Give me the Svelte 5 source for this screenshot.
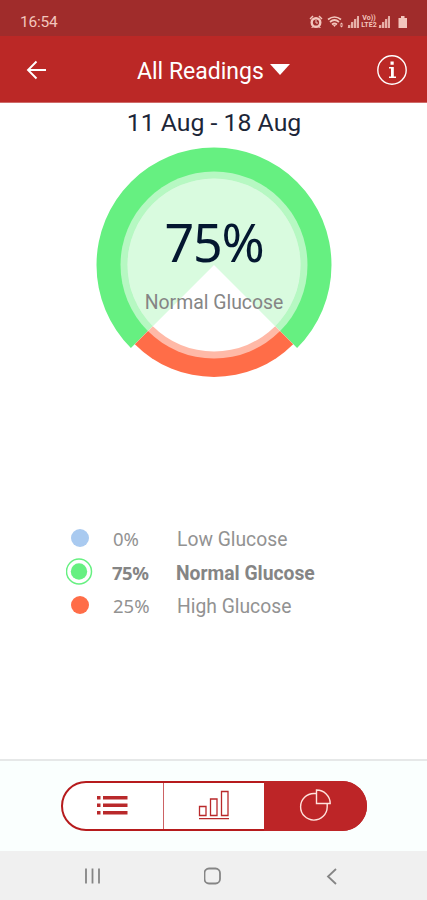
<script lang="ts">
	type Reading = { id: string; label: string; percent: number; color: string };

	const readings: Reading[] = [
		{ id: 'low', label: 'Low Glucose', percent: 0, color: '#a9caf0' },
		{ id: 'normal', label: 'Normal Glucose', percent: 75, color: '#66f081' },
		{ id: 'high', label: 'High Glucose', percent: 25, color: '#ff6d48' }
	];

	let selectedId = $state('normal');
	let view = $state('pie');

	const selected = $derived(readings.find((r) => r.id === selectedId) ?? readings[1]);

	// Slices start at the lower left, 135 degrees clockwise from three o'clock
	const slices = readings.map((reading, i) => {
		const before = readings.slice(0, i).reduce((sum, r) => sum + r.percent, 0);
		return { ...reading, start: 135 + before * 3.6, end: 135 + (before + reading.percent) * 3.6 };
	});

	function sector(start: number, end: number, radius: number) {
		const point = (deg: number) => {
			const a = (deg * Math.PI) / 180;
			return `${(118 + radius * Math.cos(a)).toFixed(2)} ${(118 + radius * Math.sin(a)).toFixed(2)}`;
		};
		return `M118 118L${point(start)}A${radius} ${radius} 0 ${end - start > 180 ? 1 : 0} 1 ${point(end)}Z`;
	}
</script>

<div class="screen">
	<div class="status">
		<span class="time">16:54</span>
		<div class="indicators">
			<svg width="52" height="16" viewBox="0 0 52 16" fill="currentColor">
				<circle cx="8" cy="8.5" r="4.3" fill="none" stroke="currentColor" stroke-width="2.400" />
				<path d="M1.500 4.500l3-3 1 1-3 3zM14.500 4.500l-3-3-1 1 3 3zM3 14l2-2 1 1-2 1zM13 14l-2-2-1 1 2 1z" />
				<path d="M8 6v3h2" fill="none" stroke="currentColor" />
				<path d="M20 5.500q6.500-5 13 0M22 8q4.500-4 9 0M24 10.500q2.500-2 5 0" fill="none" stroke="currentColor" stroke-width="1.700" />
				<path d="M25 11h3l-1.500 2zM33.500 8.500l1.800 2h-3.600zM33.500 13.500l-1.800-2h3.600z" />
				<path d="M39 14l12-12v12z" opacity=".3" />
				<path d="M40 11h2v3h-2zM43 8h2v6h-2zM46 5h2v9h-2zM49 2h2v12h-2z" opacity=".8" />
			</svg>
			<div class="volte">
				<span>Vo))</span>
				<span>LTE2</span>
			</div>
			<svg width="32" height="16" viewBox="0 0 32 16" fill="currentColor">
				<path d="M0 14l12-12v12z" opacity=".3" />
				<path d="M1 11h2v3H1zM4 8h2v6H4zM7 5h2v9H7zM10 2h2v12h-2z" opacity=".8" />
				<path d="M23 2h3.500v2H29v10h-8.500V4H23z" />
			</svg>
		</div>
	</div>

	<header>
		<button class="back" aria-label="Back">
			<svg width="22" height="20" viewBox="0 0 22 20">
				<path d="M20 10H2M10.500 1.500L2 10l8.500 8.500" />
			</svg>
		</button>
		<button class="title">
			<span>All Readings</span>
			<svg width="20" height="11" viewBox="0 0 20 11"><path d="M0 0h20L10 11z" /></svg>
		</button>
		<button class="info" aria-label="Information">
			<svg width="32" height="32" viewBox="0 0 32 32">
				<circle cx="16" cy="16" r="14.200" />
				<path d="M14.500 7.500h3.200v3.200h-3.200zM13 13h4.800v9.500H20V24h-7v-1.500h2v-8h-2z" />
			</svg>
		</button>
	</header>

	<main>
		<h1>11 Aug - 18 Aug</h1>

		<div class="chart">
			<svg width="236" height="236" viewBox="0 0 236 236">
				{#each slices.filter((s) => s.percent > 0) as slice}
					<path
						d={sector(slice.start, slice.end, slice.id === selectedId ? 117.5 : 112)}
						fill={slice.color}
					/>
				{/each}
				<circle cx="118" cy="118" r="93.500" fill="#fff" fill-opacity=".52" />
				<circle cx="118" cy="118" r="86.500" fill="#fff" />
				{#each slices.filter((s) => s.id === selectedId) as slice}
					<path d={sector(slice.start, slice.end, 86.5)} fill={slice.color} fill-opacity=".25" />
				{/each}
			</svg>
			<div class="summary">
				<strong>{selected.percent}%</strong>
				<span>{selected.label}</span>
			</div>
		</div>

		<ul class="legend">
			{#each readings as reading}
				<li class:selected={reading.id === selectedId}>
					<button onclick={() => (selectedId = reading.id)}>
						<svg width="28" height="28" viewBox="0 0 28 28">
							{#if reading.id === selectedId}
								<circle cx="13" cy="13.500" r="12.500" fill="#fff" stroke={reading.color} stroke-width="1.500" />
								<circle cx="13" cy="13.500" r="8.200" fill={reading.color} />
							{:else}
								<circle cx="14" cy="13" r="9" fill={reading.color} />
							{/if}
						</svg>
						<span class="percent">{reading.percent}%</span>
						<span class="label">{reading.label}</span>
					</button>
				</li>
			{/each}
		</ul>
	</main>

	<footer>
		<div class="tabs">
			<button class:active={view === 'list'} aria-label="List" onclick={() => (view = 'list')}>
				<svg width="34" height="22" viewBox="0 0 34 22" fill="currentColor">
					<path d="M1 1h3.500v3.500H1zM7 1h24.500v3.500H7zM1 8.500h3.500V12H1zM7 8.500h24.500V12H7zM1 16h3.500v3.500H1zM7 16h24.500v3.500H7z" />
				</svg>
			</button>
			<button class:active={view === 'bars'} aria-label="Bars" onclick={() => (view = 'bars')}>
				<svg width="32" height="32" viewBox="0 0 32 32" fill="none" stroke="currentColor" stroke-width="1.300">
					<path d="M1.500 16.500h6.500v9H1.500zM12.500 9h6.500v16.500h-6.500zM23.500 1.500H30v24h-6.500zM1 28.700h30" />
				</svg>
			</button>
			<button class:active={view === 'pie'} aria-label="Pie" onclick={() => (view = 'pie')}>
				<svg width="36" height="36" viewBox="0 0 36 36" fill="none" stroke="currentColor" stroke-width="1.400">
					<path d="M18.500 5.500H16A13.300 13.300 0 1 0 29.200 19v-3" />
					<path d="M18.500 2v13.500h13.700A13.700 13.500 0 0 0 18.500 2z" />
				</svg>
			</button>
		</div>
	</footer>

	<nav>
		<svg width="18" height="18" viewBox="0 0 18 18"><path d="M2 1.500v15M8.500 1.500v15M15 1.500v15" /></svg>
		<svg width="18" height="18" viewBox="0 0 18 18"><rect x="0.500" y="1.500" width="15.500" height="15" rx="4.500" /></svg>
		<svg width="18" height="18" viewBox="0 0 18 18"><path d="M12 2L4 9.500l8 7.500" /></svg>
	</nav>
</div>

<style>
	:global(body) {
		margin: 0;
	}

	.screen {
		display: flex;
		flex-direction: column;
		width: 427px;
		height: 900px;
		overflow: hidden;
		background: #fff;
		font-family: Roboto, sans-serif;
	}

	button {
		display: flex;
		align-items: center;
		padding: 0;
		border: 0;
		background: none;
		color: inherit;
		font: inherit;
	}

	.status {
		display: flex;
		flex: none;
		align-items: center;
		justify-content: space-between;
		box-sizing: border-box;
		height: 36px;
		padding: 7px 17px 0 20px;
		background: #a02c2b;
		color: #f3c6bd;
	}

	.time {
		font-size: 15.5px;
		letter-spacing: -0.2px;
	}

	.indicators {
		display: flex;
		align-items: center;
	}

	.volte {
		display: flex;
		flex-direction: column;
		align-items: center;
		width: 18px;
		font-size: 7px;
		font-weight: 700;
		line-height: 7px;
	}

	header {
		display: grid;
		flex: none;
		grid-template-columns: 137px 1fr 51px;
		align-items: center;
		box-sizing: border-box;
		height: 67px;
		border-bottom: 1px solid #cf6b69;
		background: #bb2826;
		color: #fff;
	}

	.back {
		padding: 1px 0 0 26px;
	}

	.back path {
		fill: none;
		stroke: #fff;
		stroke-width: 1.9;
	}

	.title {
		gap: 6px;
		padding-top: 4px;
		font-size: 23px;
	}

	.title svg {
		margin-top: -3px;
		fill: #fff;
	}

	.info {
		padding-top: 2px;
	}

	.info circle {
		fill: none;
		stroke: #fff;
		stroke-width: 1.4;
	}

	.info path {
		fill: #fff;
	}

	main {
		display: flex;
		flex: 1;
		flex-direction: column;
		align-items: center;
	}

	h1 {
		margin: 5px 0 0 1px;
		color: #1c2638;
		font-size: 24.8px;
		font-weight: 400;
		line-height: 30px;
		white-space: nowrap;
	}

	.chart {
		display: grid;
		margin: 9px 0 0 1px;
	}

	.chart > * {
		grid-area: 1 / 1;
	}

	.summary {
		display: flex;
		flex-direction: column;
		align-items: center;
		padding-top: 59px;
	}

	.summary strong {
		color: #041730;
		font: 400 52px/72px 'Noto Sans', sans-serif;
		letter-spacing: -1.2px;
	}

	.summary span {
		margin-top: 12px;
		color: #858585;
		font-size: 19.4px;
		line-height: 25px;
	}

	.legend {
		align-self: stretch;
		margin: 139px 0 0 66px;
		padding: 0;
		list-style: none;
		color: #929292;
		font-size: 19.3px;
	}

	.legend button {
		height: 33.5px;
	}

	.percent {
		width: 64px;
		margin-left: 19px;
		font-family: 'Noto Sans', sans-serif;
		font-size: 18.5px;
		text-align: left;
	}

	.label {
		padding-top: 2px;
	}

	.selected {
		color: #858585;
		font-weight: 700;
	}

	.selected .percent {
		margin-left: 18px;
		letter-spacing: -0.5px;
	}

	footer {
		display: flex;
		flex: none;
		align-items: center;
		justify-content: center;
		box-sizing: border-box;
		height: 92px;
		border-top: 2px solid #e6e8e8;
		background: #fafffe;
	}

	.tabs {
		display: grid;
		grid-template-columns: 100px 101px 1fr;
		box-sizing: border-box;
		width: 306px;
		height: 50px;
		margin-left: 1px;
		border: 2px solid #b61b1d;
		border-radius: 25px;
		background: #fff;
		color: #b9292b;
	}

	.tabs button {
		justify-content: center;
	}

	.tabs button:first-child {
		border-radius: 23px 0 0 23px;
	}

	.tabs button:last-child {
		margin: -2px -2px -2px 0;
		border-radius: 0 25px 25px 0;
	}

	.tabs button + button {
		border-left: 1px solid #cc6264;
	}

	.tabs button.active {
		border-color: #bd2527;
		background: #bd2527;
		color: #ffe2dc;
	}

	nav {
		display: flex;
		flex: none;
		align-items: center;
		gap: 102px;
		height: 49px;
		padding: 1px 0 0 84px;
		box-sizing: border-box;
		background: #f0f0f0;
	}

	nav svg {
		fill: none;
		stroke: #858585;
		stroke-width: 1.8;
	}
</style>
